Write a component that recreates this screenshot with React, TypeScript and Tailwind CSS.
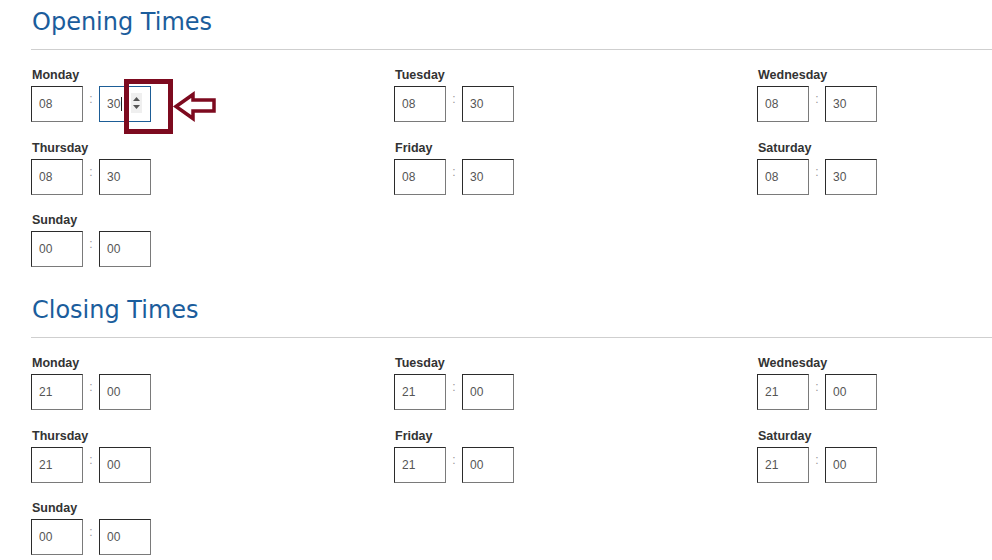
import React from "react";

type Cell = { day: string; h: string; m: string; focus?: boolean };

const opening: Cell[] = [
  { day: "Monday", h: "08", m: "30", focus: true },
  { day: "Tuesday", h: "08", m: "30" },
  { day: "Wednesday", h: "08", m: "30" },
  { day: "Thursday", h: "08", m: "30" },
  { day: "Friday", h: "08", m: "30" },
  { day: "Saturday", h: "08", m: "30" },
  { day: "Sunday", h: "00", m: "00" },
];

const closing: Cell[] = [
  { day: "Monday", h: "21", m: "00" },
  { day: "Tuesday", h: "21", m: "00" },
  { day: "Wednesday", h: "21", m: "00" },
  { day: "Thursday", h: "21", m: "00" },
  { day: "Friday", h: "21", m: "00" },
  { day: "Saturday", h: "21", m: "00" },
  { day: "Sunday", h: "00", m: "00" },
];

function Box({ value, focus }: { value: string; focus?: boolean }) {
  if (focus) {
    return (
      <div className="relative flex h-[36px] w-[52px] items-center border border-[#1d5d96] bg-white pl-[7px] text-[12px] text-[#555]">
        <span>{value}</span>
        <span className="ml-[1px] inline-block h-[14px] w-[1px] bg-[#222]" />
        <div className="absolute left-[31px] top-[6px] flex h-[20px] w-[11px] flex-col items-center justify-center gap-[4px] bg-[#efefef]">
          <svg width="7" height="4" viewBox="0 0 7 4">
            <path d="M0 4 L3.5 0 L7 4 Z" fill="#555" />
          </svg>
          <svg width="7" height="4" viewBox="0 0 7 4">
            <path d="M0 0 L3.5 4 L7 0 Z" fill="#555" />
          </svg>
        </div>
      </div>
    );
  }
  return (
    <div className="flex h-[36px] w-[52px] items-center border border-t-[#2b2b2b] border-l-[#2b2b2b] border-r-[#7a7a7a] border-b-[#7a7a7a] bg-white pl-[7px] text-[12px] text-[#555]">
      {value}
    </div>
  );
}

function TimeCell({ c }: { c: Cell }) {
  return (
    <div className="flex h-[56px] flex-col">
      <div className="h-[17px] pl-[1px] text-[12.5px] font-bold leading-[17px] text-[#333]">
        {c.day}
      </div>
      <div className="mt-[2px] flex">
        <Box value={c.h} />
        <span className="mt-[5px] w-[16px] text-center text-[12px] leading-[17px] text-[#999]">
          :
        </span>
        <Box value={c.m} focus={c.focus} />
      </div>
    </div>
  );
}

function Section({ title, cells }: { title: string; cells: Cell[] }) {
  return (
    <section>
      <h2
        className="pl-[1px] pt-[4px] text-[24px] leading-[36px] text-[#1b5d9c]"
        style={{ fontFamily: '"DejaVu Sans", sans-serif' }}
      >
        {title}
      </h2>
      <div className="mt-[9px] border-t border-[#cfcfcf]" />
      <div className="mt-[17px] grid grid-cols-[363px_363px_1fr] gap-y-[16.5px]">
        {cells.map((c) => (
          <TimeCell key={c.day} c={c} />
        ))}
      </div>
    </section>
  );
}

export default function App() {
  return (
    <div
      className="relative h-[560px] w-full overflow-hidden bg-white pl-[31px]"
      style={{ fontFamily: '"Liberation Sans", Arial, sans-serif' }}
    >
      <Section title="Opening Times" cells={opening} />
      <div className="h-[20px]" />
      <Section title="Closing Times" cells={closing} />

      {/* annotation overlay */}
      <div className="absolute left-[124px] top-[79px] h-[55px] w-[49px] border-[5px] border-[#7d0a1f]" />
      <svg
        className="absolute left-[170px] top-[90px]"
        width="50"
        height="32"
        viewBox="0 0 50 32"
      >
        <path
          d="M6 16.5 L23 4.5 L23 10 L44 10 L44 21 L23 21 L23 28.5 Z"
          fill="white"
          stroke="#7d0a1f"
          strokeWidth="3.5"
          strokeLinejoin="miter"
        />
      </svg>
    </div>
  );
}
